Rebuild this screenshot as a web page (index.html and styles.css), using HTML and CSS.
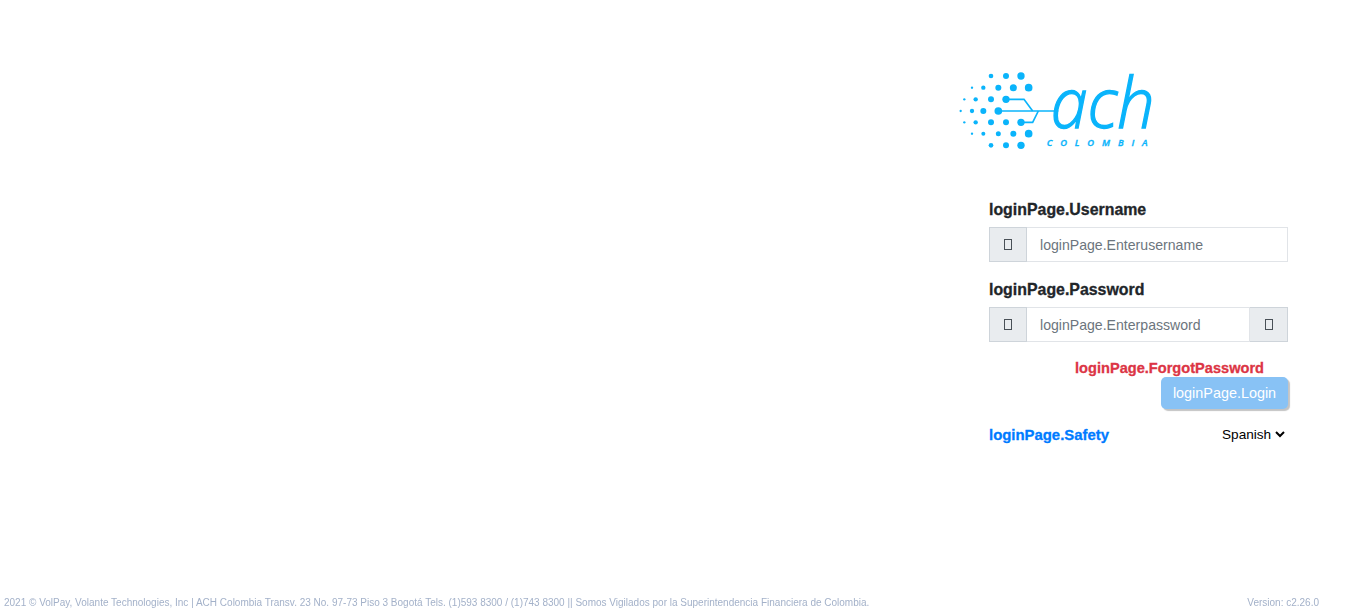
FILE: index.html
```html
<!DOCTYPE html>
<html lang="en">
<head>
	<meta charset="utf-8">
	<title>Login</title>
	<link rel="stylesheet" href="styles.css">
</head>
<body>
	<div class="page">
		<div class="login-col">
			<svg class="logo" viewBox="0 0 660 300" width="220" height="100">
				<g fill="#0ab4fb">
					<circle cx="123" cy="48" r="7"/><circle cx="168" cy="48" r="9"/><circle cx="213" cy="48" r="11"/>
					<circle cx="66" cy="83" r="3.5"/><circle cx="100" cy="83" r="6.5"/><circle cx="145" cy="83" r="9"/><circle cx="190" cy="83" r="10.5"/><circle cx="236" cy="83" r="11.5"/>
					<circle cx="43" cy="118" r="3.5"/><circle cx="77" cy="118" r="6.5"/><circle cx="123" cy="118" r="9"/><circle cx="168" cy="118" r="11"/>
					<circle cx="32" cy="153" r="3.5"/><circle cx="66" cy="153" r="6.5"/><circle cx="100" cy="153" r="9"/><circle cx="145" cy="153" r="11.5"/>
					<circle cx="43" cy="187" r="3.5"/><circle cx="77" cy="187" r="6.5"/><circle cx="123" cy="187" r="9"/><circle cx="168" cy="187" r="9"/><circle cx="213" cy="187" r="11"/>
					<circle cx="66" cy="221" r="3.5"/><circle cx="100" cy="221" r="6"/><circle cx="145" cy="221" r="7.5"/><circle cx="190" cy="221" r="9"/><circle cx="236" cy="221" r="11.5"/>
					<circle cx="123" cy="256" r="7"/><circle cx="168" cy="256" r="9"/><circle cx="213" cy="256" r="11"/>
				</g>
				<g fill="none" stroke="#0ab4fb" stroke-width="5">
					<path d="M168 118H222L248 153"/>
					<path d="M145 153H325"/>
					<path d="M213 187H248L265 153"/>
				</g>
				<text class="logo-ach" x="302" y="205" textLength="312" lengthAdjust="spacingAndGlyphs">ach</text>
				<text class="logo-sub" x="290" y="258" textLength="303">COLOMBIA</text>
			</svg>
			<form class="login-form">
				<label class="field-label">loginPage.Username</label>
				<div class="input-group">
					<span class="addon"><i class="tofu"></i></span>
					<input class="text-input" type="text" placeholder="loginPage.Enterusername">
				</div>
				<label class="field-label">loginPage.Password</label>
				<div class="input-group">
					<span class="addon"><i class="tofu"></i></span>
					<input class="text-input" type="password" placeholder="loginPage.Enterpassword">
					<span class="addon addon-end"><i class="tofu"></i></span>
				</div>
				<div class="forgot-row">
					<a class="forgot">loginPage.ForgotPassword</a>
				</div>
				<div class="button-row">
					<button class="login-btn" type="button" disabled>loginPage.Login</button>
				</div>
				<div class="bottom-row">
					<a class="safety">loginPage.Safety</a>
					<select class="lang">
						<option>Spanish</option>
					</select>
				</div>
			</form>
		</div>
		<div class="footer">
			<span>2021 © VolPay, Volante Technologies, Inc | ACH Colombia Transv. 23 No. 97-73 Piso 3 Bogotá Tels. (1)593 8300 / (1)743 8300 || Somos Vigilados por la Superintendencia Financiera de Colombia.</span>
			<span>Version: c2.26.0</span>
		</div>
	</div>
</body>
</html>
```

FILE: styles.css
```css
html, body {
	margin: 0;
	height: 100%;
	background: #fff;
	font-family: "Liberation Sans", Arial, sans-serif;
}

.page {
	display: flex;
	flex-direction: column;
	justify-content: space-between;
	height: 612px;
	overflow: hidden;
}

.login-col {
	display: flex;
	flex-direction: column;
	align-self: flex-end;
	width: 338px;
	margin-right: 78px;
	padding-top: 60px;
}

.logo {
	display: block;
	overflow: visible;
}

.logo-ach {
	font-family: "Open Sans", sans-serif;
	font-style: italic;
	font-weight: 300;
	font-size: 208px;
	fill: #0ab4fb;
	stroke: #0ab4fb;
	stroke-width: 4px;
}

.logo-sub {
	font-family: "Open Sans", sans-serif;
	font-style: italic;
	font-weight: 600;
	font-size: 28px;
	fill: #0ab4fb;
	stroke: #0ab4fb;
	stroke-width: 1px;
}

.login-form {
	display: flex;
	flex-direction: column;
	margin-left: 39px;
	margin-top: 41px;
}

.field-label {
	display: block;
	height: 18px;
	line-height: 18px;
	font-size: 15.9px;
	font-weight: 700;
	color: #212529;
	margin-bottom: 8px;
	-webkit-text-stroke: 0.3px #212529;
}

.input-group {
	display: flex;
	height: 35px;
	margin-bottom: 19px;
}

.addon {
	display: flex;
	align-items: center;
	justify-content: center;
	box-sizing: border-box;
	width: 38px;
	background: #e9ecef;
	border: 1px solid #ced4da;
}

.addon-end {
	border-left: 0;
}

.tofu {
	display: block;
	box-sizing: border-box;
	width: 8px;
	height: 11px;
	border: 1px solid #495057;
}

.text-input {
	flex: 1;
	min-width: 0;
	box-sizing: border-box;
	height: 35px;
	border: 1px solid #e1e4e8;
	border-left: 0;
	padding: 0 12px 0 13px;
	font-family: inherit;
	font-size: 14.1px;
	color: #495057;
	outline: none;
}

.text-input::placeholder {
	color: #6c757d;
	opacity: 1;
}

.forgot-row {
	display: flex;
	justify-content: flex-end;
	margin-top: -1px;
	padding-right: 24px;
}

.forgot {
	font-size: 14.6px;
	line-height: 16px;
	font-weight: 700;
	color: #dc3545;
	-webkit-text-stroke: 0.3px #dc3545;
}

.button-row {
	display: flex;
	justify-content: flex-end;
	margin-top: 1px;
}

.login-btn {
	width: 127px;
	height: 32px;
	padding: 0;
	border: 0;
	border-radius: 5px;
	background: #88c2f5;
	color: #fff;
	font-family: inherit;
	font-size: 14.4px;
	box-shadow: 2px 2px 1px #c4c4c4;
}

.bottom-row {
	display: flex;
	justify-content: space-between;
	align-items: center;
	margin-top: 16px;
}

.safety {
	padding-top: 2px;
	font-size: 14.9px;
	font-weight: 700;
	color: #007bff;
	-webkit-text-stroke: 0.3px #007bff;
}

.lang {
	border: 0;
	background: #fff;
	font-family: inherit;
	font-size: 13.6px;
	color: #000;
	outline: none;
}

.footer {
	display: flex;
	justify-content: space-between;
	padding: 0 47px 4px 4px;
	font-size: 10px;
	line-height: 11px;
	color: #a3b1c9;
	filter: blur(0.4px);
}
```
